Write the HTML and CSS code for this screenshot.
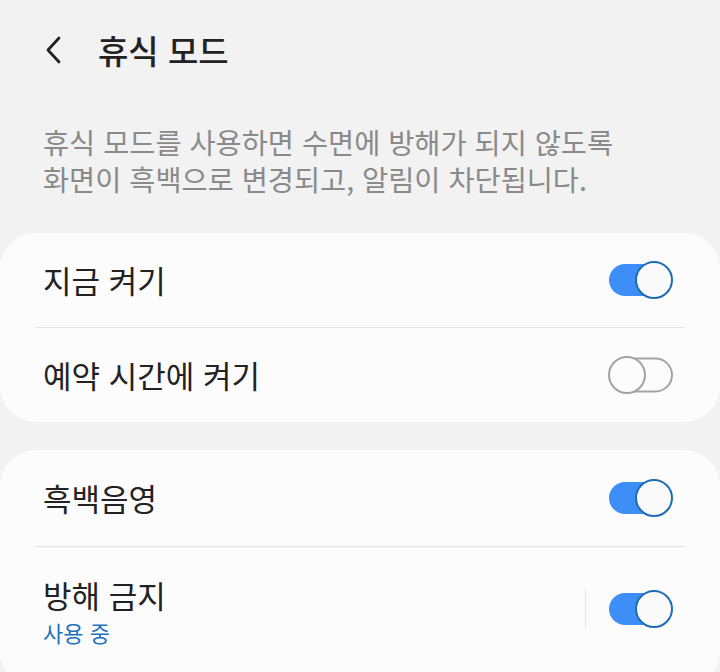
FILE: index.html
```html
<!DOCTYPE html>
<html lang="ko">
<head>
    <meta charset="UTF-8">
    <meta name="viewport" content="width=device-width, initial-scale=1.0">
    <title>휴식 모드</title>
    <link rel="stylesheet" href="styles.css">
</head>
<body>
    <div class="header">
        <svg class="back" width="24" height="32" viewBox="0 0 24 32">
            <path d="M16 4 L5 16 L16 28" fill="none" stroke="#222" stroke-width="2.8" stroke-linecap="round" stroke-linejoin="round"/>
        </svg>
        <h1>휴식 모드</h1>
    </div>
    <p class="desc">휴식 모드를 사용하면 수면에 방해가 되지 않도록<br>화면이 흑백으로 변경되고, 알림이 차단됩니다.</p>

    <div class="card">
        <div class="row">
            <span class="label">지금 켜기</span>
            <svg class="switch" width="68" height="40" viewBox="0 0 68 40">
                <rect x="2" y="4" width="63" height="32" rx="16" fill="#3e8ef7"/>
                <circle cx="47" cy="20" r="18" fill="#fafafa" stroke="#1d6cb5" stroke-width="2"/>
            </svg>
        </div>
        <div class="divider"></div>
        <div class="row">
            <span class="label">예약 시간에 켜기</span>
            <svg class="switch" width="68" height="40" viewBox="0 0 68 40">
                <rect x="3" y="3.5" width="62" height="33" rx="16.5" fill="none" stroke="#a3a3a3" stroke-width="2"/>
                <circle cx="20" cy="20" r="18" fill="#fcfcfc" stroke="#a3a3a3" stroke-width="2"/>
            </svg>
        </div>
    </div>

    <div class="card">
        <div class="row row-first">
            <span class="label">흑백음영</span>
            <svg class="switch" width="68" height="40" viewBox="0 0 68 40">
                <rect x="2" y="4" width="63" height="32" rx="16" fill="#3e8ef7"/>
                <circle cx="47" cy="20" r="18" fill="#fafafa" stroke="#1d6cb5" stroke-width="2"/>
            </svg>
        </div>
        <div class="divider"></div>
        <div class="row row-sub">
            <div class="text">
                <span class="label">방해 금지</span>
                <span class="sub">사용 중</span>
            </div>
            <div class="actions">
                <div class="vline"></div>
                <svg class="switch" width="68" height="40" viewBox="0 0 68 40">
                    <rect x="2" y="4" width="63" height="32" rx="16" fill="#3e8ef7"/>
                    <circle cx="47" cy="20" r="18" fill="#fafafa" stroke="#1d6cb5" stroke-width="2"/>
                </svg>
            </div>
        </div>
    </div>
</body>
</html>
```

FILE: styles.css
```css
body {
    margin: 0;
    background-color: #f2f2f2;
    font-family: "Noto Sans CJK KR", "Noto Sans", sans-serif;
    color: #222;
}
.header {
    height: 100px;
    display: flex;
    align-items: center;
    padding-left: 43px;
}
.back {
    display: block;
}
h1 {
    margin: 0 0 0 31px;
    font-size: 33px;
    font-weight: 500;
    line-height: 40px;
}
.desc {
    margin: 23px 0 36px;
    padding: 0 43px;
    font-size: 28.4px;
    line-height: 37px;
    color: #8a8a8a;
}
.card {
    background-color: #fcfcfc;
    border-radius: 36px;
    margin-bottom: 28px;
}
.row {
    height: 94px;
    display: flex;
    align-items: center;
    justify-content: space-between;
    padding: 0 45px 0 43px;
}
.row-first {
    height: 96px;
}
.label {
    font-size: 31px;
    line-height: 40px;
}
.divider {
    height: 1px;
    margin: 0 35px;
    background-color: #e3e3e3;
}
.switch {
    display: block;
}
.row-sub {
    height: 140px;
    align-items: flex-start;
}
.text {
    display: flex;
    flex-direction: column;
    padding-top: 28px;
}
.sub {
    font-size: 22px;
    line-height: 30px;
    color: #1f72bd;
    margin-top: 2px;
}
.actions {
    display: flex;
    align-items: center;
    gap: 21px;
    padding-top: 42px;
}
.vline {
    width: 1px;
    height: 38px;
    background-color: #e3e3e3;
}
```
